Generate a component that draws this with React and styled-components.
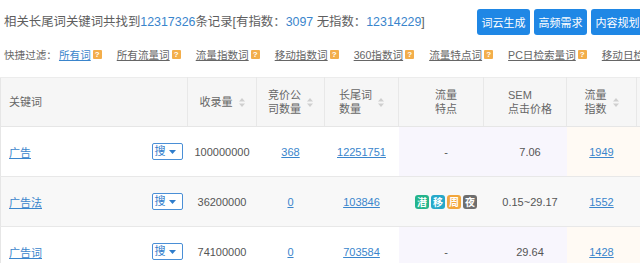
import React from "react";
import styled, { createGlobalStyle } from "styled-components";

const GlobalStyle = createGlobalStyle`
  html, body {
    margin: 0;
    padding: 0;
    background: #ffffff;
    overflow: hidden;
  }
  body {
    font-family: "Liberation Sans", "Noto Sans CJK SC", sans-serif;
    color: #555555;
  }
`;

const Page = styled.div`
  width: 760px;
`;

const TopBar = styled.div`
  width: 640px;
  height: 42px;
  padding-left: 4px;
  display: flex;
  align-items: center;
  font-size: 12.4px;
  color: #5e5e5e;
`;

const Num = styled.span`
  color: #3a85cc;
`;

const Buttons = styled.div`
  margin-left: auto;
  display: flex;
  gap: 4px;
  padding-top: 1px;
`;

const BlueButton = styled.button`
  height: 26px;
  width: 53px;
  padding: 0;
  border: none;
  border-radius: 3px;
  background: #1f87e5;
  color: #ffffff;
  font-family: "Noto Sans CJK SC", sans-serif;
  font-size: 11px;
  cursor: pointer;
`;

const FilterBar = styled.div`
  height: 24px;
  padding-left: 4px;
  margin-bottom: 11px;
  display: flex;
  align-items: center;
  font-size: 10.6px;
  color: #666666;
  white-space: nowrap;
`;

const FilterItem = styled.span`
  display: inline-flex;
  align-items: center;
  margin-right: 15px;
`;

const FilterLink = styled.a`
  color: ${(p) => (p.active ? "#3a85cc" : "#666666")};
  text-decoration: underline;
  cursor: pointer;
`;

const Help = styled.span`
  width: 9px;
  height: 9px;
  margin-left: 2px;
  border-radius: 1px;
  background: #f3ae4b;
  color: #ffffff;
  font-size: 8px;
  font-weight: 700;
  line-height: 9px;
  text-align: center;
`;

const Table = styled.table`
  border-collapse: collapse;
  table-layout: fixed;
  width: 716px;
  font-size: 11px;
  border-left: 1px solid #e6e6e6;
  border-top: 1px solid #ececec;
`;

const Th = styled.th`
  height: 48px;
  padding: 0;
  background: #f6f6f6;
  border-right: 1px solid #e8e8e8;
  border-bottom: 1px solid #e6e6e6;
  font-weight: 400;
  color: #666666;
  line-height: 14px;
  text-align: ${(p) => (p.left ? "left" : "center")};
  padding-left: ${(p) => (p.left ? "8px" : p.shift ? "10px" : "0")};
`;

const HeadInner = styled.span`
  display: inline-flex;
  align-items: center;
  gap: 6px;
  text-align: left;
`;

const tint = {
  plain: "#ffffff",
  purple: "#f8f6fd",
  orange: "#fffaf4",
};

const Td = styled.td`
  height: 49px;
  padding: 0;
  padding-left: ${(p) => (p.left ? "8px" : p.shift ? "10px" : "0")};
  padding-right: ${(p) => (p.left ? "5px" : "0")};
  border-bottom: 1px solid #e8e8e8;
  background: ${(p) => (p.striped ? "#f8f8f8" : tint[p.tone || "plain"])};
  color: #555555;
  text-align: ${(p) => (p.left ? "left" : "center")};
`;

const KeywordCell = styled.div`
  display: flex;
  align-items: center;
  justify-content: space-between;
`;

const DataLink = styled.a`
  color: #3a85cc;
  text-decoration: underline;
  cursor: pointer;
`;

const SearchSelect = styled.span`
  width: 27px;
  height: 15px;
  display: inline-flex;
  align-items: center;
  gap: 3px;
  padding-left: 2px;
  border: 1px solid #4a8fd6;
  border-radius: 2px;
  background: #ffffff;
  color: #2f7dcc;
  font-size: 11px;
  line-height: 15px;
`;

const Tags = styled.span`
  display: inline-flex;
  gap: 2px;
  vertical-align: middle;
`;

const Tag = styled.span`
  width: 14px;
  height: 14px;
  border-radius: 3px;
  background: ${(p) => p.color};
  color: #ffffff;
  font-family: "Noto Sans CJK SC", sans-serif;
  font-size: 10px;
  font-weight: 700;
  line-height: 14px;
  text-align: center;
`;

const SortIcon = () => (
  <svg width="6" height="9" viewBox="0 0 6 9">
    <path d="M3 0 L6 3.5 L0 3.5 Z" fill="#cfcfcf" />
    <path d="M3 9 L6 5.5 L0 5.5 Z" fill="#cfcfcf" />
  </svg>
);

const Caret = () => (
  <svg width="7" height="4" viewBox="0 0 7 4">
    <path d="M0 0 L7 0 L3.5 4 Z" fill="#2f7dcc" />
  </svg>
);

const filters = [
  { label: "所有词", active: true },
  { label: "所有流量词" },
  { label: "流量指数词" },
  { label: "移动指数词" },
  { label: "360指数词" },
  { label: "流量特点词" },
  { label: "PC日检索量词" },
  { label: "移动日检索量词" },
];

const tagColors = {
  潜: "#25b48c",
  移: "#26a8c9",
  周: "#f2a63c",
  夜: "#6e6e6e",
};

const rows = [
  { kw: "广告", sl: "100000000", jj: "368", cw: "12251751", sem: "7.06", idx: "1949" },
  { kw: "广告法", sl: "36200000", jj: "0", cw: "103846", tags: ["潜", "移", "周", "夜"], sem: "0.15~29.17", idx: "1552", striped: true },
  { kw: "广告词", sl: "74100000", jj: "0", cw: "703584", sem: "29.64", idx: "1428" },
];

const widths = [187, 69, 68, 74, 85, 83, 70, 80];

export default function App() {
  return (
    <Page>
      <GlobalStyle />
      <TopBar>
        <span>
          相关长尾词关键词共找到<Num>12317326</Num>条记录[有指数：<Num>3097</Num> 无指数：
          <Num>12314229</Num>]
        </span>
        <Buttons>
          <BlueButton>词云生成</BlueButton>
          <BlueButton>高频需求</BlueButton>
          <BlueButton>内容规划</BlueButton>
        </Buttons>
      </TopBar>
      <FilterBar>
        <span style={{ marginRight: 2 }}>快捷过滤：</span>
        {filters.map((f) => (
          <FilterItem key={f.label}>
            <FilterLink active={f.active}>{f.label}</FilterLink>
            <Help>?</Help>
          </FilterItem>
        ))}
      </FilterBar>
      <Table>
        <colgroup>
          {widths.map((w, i) => (
            <col key={i} style={{ width: w }} />
          ))}
        </colgroup>
        <thead>
          <tr>
            <Th left>关键词</Th>
            <Th>
              <HeadInner>
                收录量
                <SortIcon />
              </HeadInner>
            </Th>
            <Th>
              <HeadInner>
                <span>
                  竞价公
                  <br />
                  司数量
                </span>
                <SortIcon />
              </HeadInner>
            </Th>
            <Th>
              <HeadInner>
                <span>
                  长尾词
                  <br />
                  数量
                </span>
                <SortIcon />
              </HeadInner>
            </Th>
            <Th shift>
              流量
              <br />
              特点
            </Th>
            <Th shift>
              <HeadInner>
                <span>
                  SEM
                  <br />
                  点击价格
                </span>
              </HeadInner>
            </Th>
            <Th>
              <HeadInner>
                <span>
                  流量
                  <br />
                  指数
                </span>
                <SortIcon />
              </HeadInner>
            </Th>
            <Th />
          </tr>
        </thead>
        <tbody>
          {rows.map((r) => (
            <tr key={r.kw}>
              <Td left striped={r.striped}>
                <KeywordCell>
                  <DataLink>{r.kw}</DataLink>
                  <SearchSelect>
                    搜<Caret />
                  </SearchSelect>
                </KeywordCell>
              </Td>
              <Td striped={r.striped}>{r.sl}</Td>
              <Td striped={r.striped}>
                <DataLink>{r.jj}</DataLink>
              </Td>
              <Td striped={r.striped}>
                <DataLink>{r.cw}</DataLink>
              </Td>
              <Td shift tone="purple" striped={r.striped}>
                {r.tags ? (
                  <Tags>
                    {r.tags.map((t) => (
                      <Tag key={t} color={tagColors[t]}>
                        {t}
                      </Tag>
                    ))}
                  </Tags>
                ) : (
                  "-"
                )}
              </Td>
              <Td shift tone="purple" striped={r.striped}>
                {r.sem}
              </Td>
              <Td tone="orange" striped={r.striped}>
                <DataLink>{r.idx}</DataLink>
              </Td>
              <Td tone="orange" striped={r.striped} />
            </tr>
          ))}
        </tbody>
      </Table>
    </Page>
  );
}
